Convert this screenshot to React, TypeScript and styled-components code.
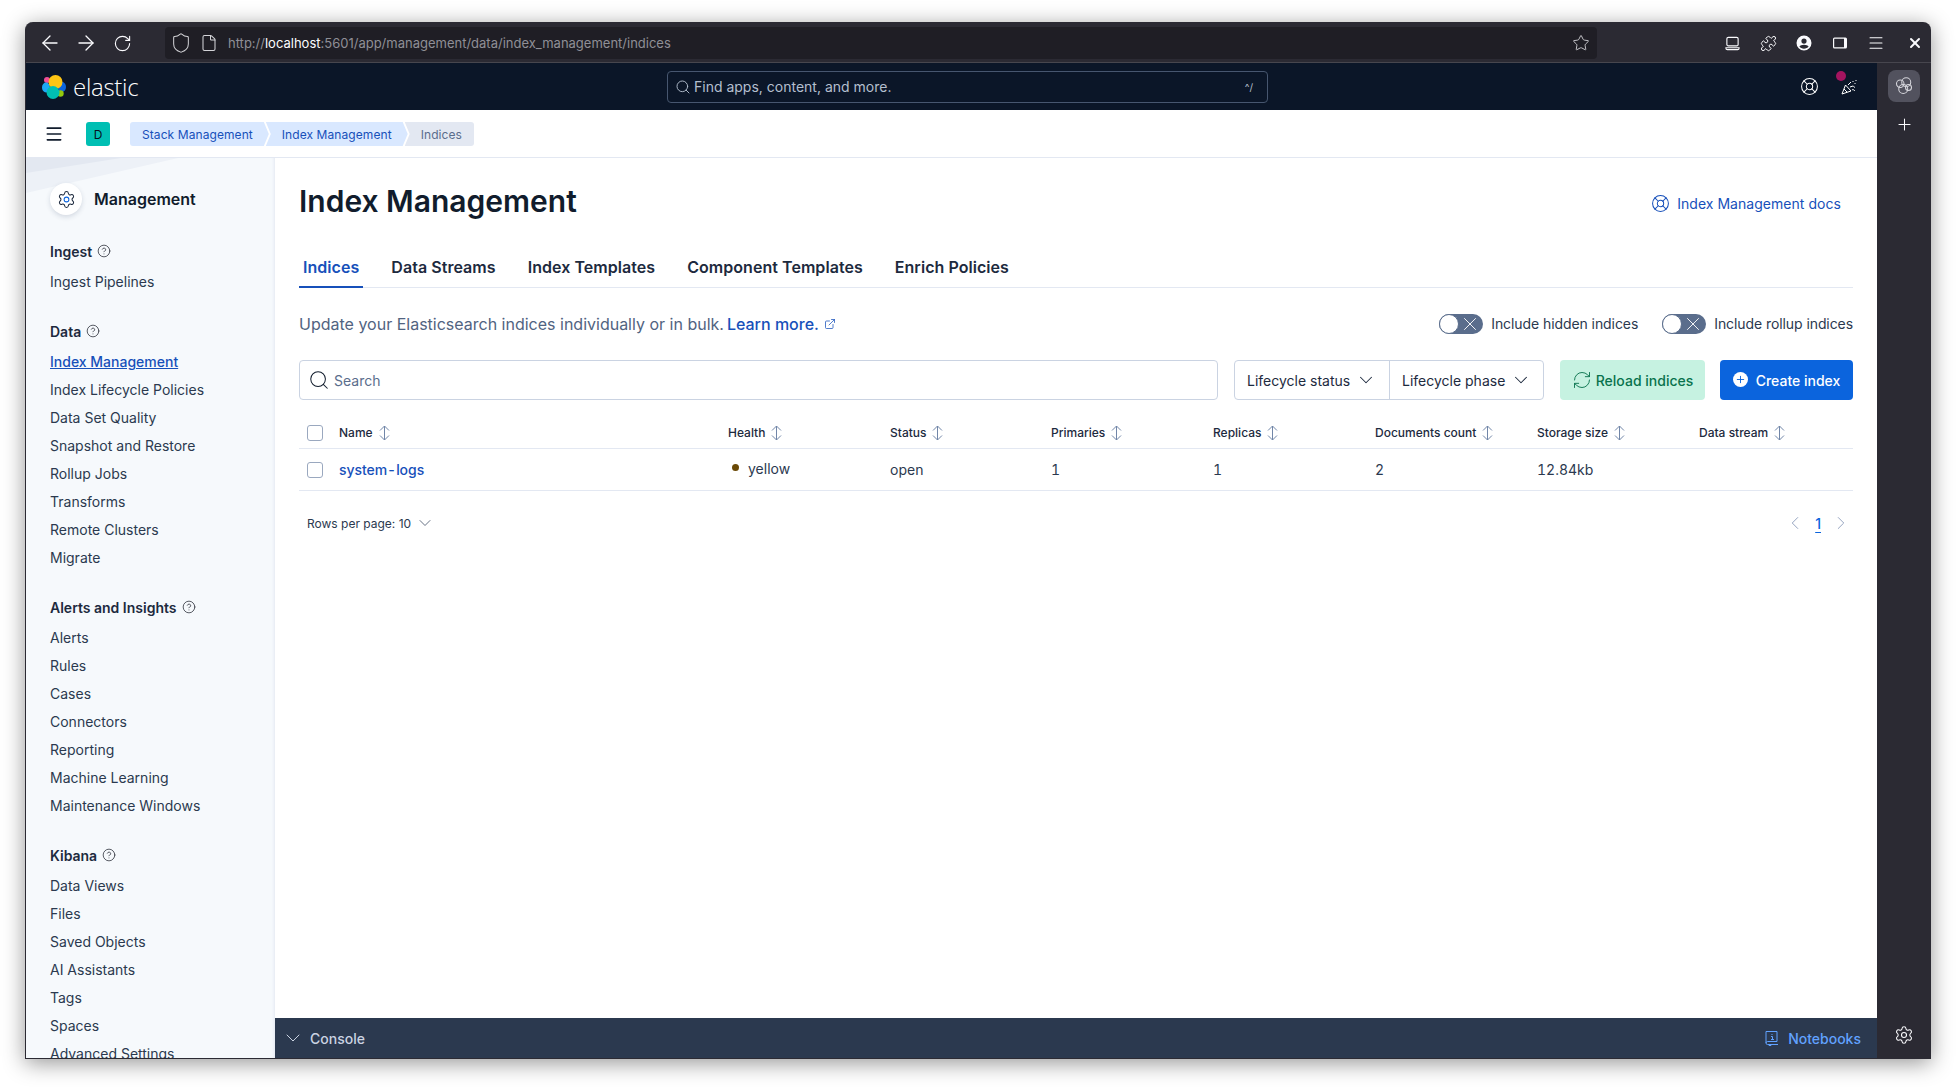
import React from "react";
import styled, { createGlobalStyle } from "styled-components";
import {
  ArrowLeft,
  ArrowRight,
  ChevronDown,
  ChevronLeft,
  ChevronRight,
  CircleHelp,
  ExternalLink,
  File,
  LifeBuoy,
  Menu,
  Plus,
  Puzzle,
  RefreshCw,
  RotateCw,
  Search,
  Settings,
  Shield,
  Star,
  X,
} from "lucide-react";

const Global = createGlobalStyle`
  html, body { margin: 0; padding: 0; background: #fff; }
  body { font-family: Inter, "Noto Sans", sans-serif; color: #1d2a3e; }
  * { box-sizing: border-box; }
`;

const Page = styled.div`
  width: 1956px;
  height: 1087px;
  padding: 22px 25px 28px 25px;
  overflow: hidden;
`;

const Win = styled.div`
  width: 1906px;
  height: 1037px;
  display: flex;
  flex-direction: column;
  background: #2b2a33;
  border-left: 1px solid #2b2a33;
  border-bottom: 1px solid #2b2a33;
  border-radius: 8px 8px 0 0;
  box-shadow: 0 4px 22px rgba(0, 0, 0, 0.42);
  overflow: hidden;
`;

const Toolbar = styled.div`
  height: 41px;
  flex: none;
  display: flex;
  align-items: center;
  padding: 2px 0 0 6px;
  color: #fbfbfe;
  border-bottom: 1px solid #47464e;
`;

const NavBtn = styled.div`
  width: 36px;
  height: 36px;
  display: flex;
  align-items: center;
  justify-content: center;
  flex: none;
`;

const AddressBar = styled.div`
  width: 1432px;
  height: 32px;
  margin-left: 25px;
  margin-right: 117px;
  flex: none;
  background: #1f1e25;
  border-radius: 4px;
  display: flex;
  align-items: center;
  padding: 0 7px 0 5px;
  gap: 8px;
  color: #d4d4d8;
`;

const Url = styled.div`
  flex: 1;
  font-family: Inter, sans-serif;
  font-size: 13px;
  color: #8f8f96;
  margin-left: 2px;
  b {
    font-weight: 400;
    color: #fbfbfe;
  }
`;

const ToolIcons = styled.div`
  display: flex;
  align-items: center;
  margin-right: 3px;
`;

const Body = styled.div`
  flex: 1;
  display: flex;
  min-height: 0;
`;

const Main = styled.div`
  width: 1851px;
  flex: none;
  display: flex;
  flex-direction: column;
  background: #fff;
`;

const SideStrip = styled.div`
  flex: 1;
  display: flex;
  flex-direction: column;
  align-items: center;
  padding-top: 7px;
  color: #fbfbfe;
`;

const StripActive = styled.div`
  width: 32px;
  height: 32px;
  border-radius: 8px;
  background: #52525e;
  display: flex;
  align-items: center;
  justify-content: center;
`;

const StripPlus = styled.div`
  margin-top: 6px;
  height: 32px;
  display: flex;
  align-items: center;
  color: #fbfbfe;
`;

const StripGear = styled.div`
  margin-top: auto;
  height: 40px;
  display: flex;
  align-items: center;
  padding-bottom: 6px;
`;

const Header = styled.header`
  height: 47px;
  flex: none;
  background: #0b1628;
  display: flex;
  align-items: center;
  padding: 0 20px 0 16px;
  color: #fff;
`;

const Logo = styled.div`
  width: 625px;
  flex: none;
  display: flex;
  align-items: center;
  gap: 7px;
  font-family: "Open Sans", Inter, sans-serif;
  font-size: 24px;
  font-weight: 300;
  letter-spacing: -0.3px;
`;

const GlobalSearch = styled.div`
  width: 601px;
  height: 32px;
  border: 1px solid #47566f;
  border-radius: 4px;
  display: flex;
  align-items: center;
  padding: 0 14px 0 7px;
  gap: 3px;
  color: #b4bfcf;
  font-size: 14px;
  span:last-child {
    margin-left: auto;
    font-size: 10px;
  }
`;

const HeaderRight = styled.div`
  margin-left: auto;
  display: flex;
  align-items: center;
  gap: 22px;
`;

const Party = styled.div`
  position: relative;
  width: 16px;
  height: 16px;
  display: flex;
`;

const Dot = styled.span`
  position: absolute;
  top: -8px;
  left: -5px;
  width: 10px;
  height: 10px;
  border-radius: 50%;
  background: #a4145f;
`;

const CrumbBar = styled.div`
  height: 48px;
  flex: none;
  display: flex;
  align-items: center;
  padding: 1px 0 0 18px;
  border-bottom: 1px solid #e3e8f2;
  color: #111c2c;
`;

const Badge = styled.div`
  width: 24px;
  height: 24px;
  margin-left: 22px;
  margin-right: 20px;
  border-radius: 3px;
  background: #00bfb3;
  display: flex;
  align-items: center;
  justify-content: center;
  font-size: 12px;
  color: #07101f;
`;

const Crumbs = styled.div`
  display: flex;
  height: 24px;
`;

const Crumb = styled.div<{ $last?: boolean; $first?: boolean }>`
  height: 24px;
  display: flex;
  align-items: center;
  font-size: 12px;
  letter-spacing: 0.08px;
  padding: ${(p) => (p.$first ? "0 16px 0 12px" : p.$last ? "0 12px 0 16px" : "0 16px")};
  margin-left: ${(p) => (p.$first ? 0 : "-3px")};
  background: ${(p) => (p.$last ? "#e3e8f2" : "#d9e8ff")};
  color: ${(p) => (p.$last ? "#5a6d8c" : "#1750ba")};
  border-radius: ${(p) => (p.$first ? "3px 0 0 3px" : p.$last ? "0 3px 3px 0" : 0)};
  clip-path: ${(p) =>
    p.$first
      ? "polygon(0 0, calc(100% - 5px) 0, 100% 50%, calc(100% - 5px) 100%, 0 100%)"
      : p.$last
        ? "polygon(0 0, 100% 0, 100% 100%, 0 100%, 5px 50%)"
        : "polygon(0 0, calc(100% - 5px) 0, 100% 50%, calc(100% - 5px) 100%, 0 100%, 5px 50%)"};
`;

const Content = styled.div`
  flex: 1;
  display: flex;
  min-height: 0;
`;

const Sidebar = styled.aside`
  position: relative;
  width: 249px;
  flex: none;
  height: 100%;
  overflow: hidden;
  background: #f6f9fc;
  padding: 25px 16px 0 24px;
  box-shadow: inset -3px 0 3px -2px #e3e8f2;
  &::before {
    content: "";
    position: absolute;
    top: 0;
    left: 0;
    width: 152px;
    height: 35px;
    background: #edf1f7;
    clip-path: polygon(0 0, 100% 0, 0 100%);
  }
  &::after {
    content: "";
    position: absolute;
    top: 0;
    left: 0;
    width: 95px;
    height: 15px;
    background: #e3e8f1;
    clip-path: polygon(0 0, 100% 0, 0 100%);
  }
`;

const SideTitle = styled.div`
  position: relative;
  z-index: 1;
  display: flex;
  align-items: center;
  gap: 12px;
  margin-bottom: 27px;
  font-size: 16px;
  font-weight: 600;
  color: #111c2c;
`;

const SolutionIcon = styled.div`
  width: 32px;
  height: 32px;
  border-radius: 50%;
  background: #fff;
  box-shadow: 0 2px 5px rgba(30, 50, 90, 0.16);
  display: flex;
  align-items: center;
  justify-content: center;
  color: #1d2a3e;
  svg circle {
    stroke: #0b64dd;
  }
`;

const Group = styled.div`
  margin-bottom: 27px;
`;

const GroupTitle = styled.div`
  height: 18px;
  margin-bottom: 7px;
  display: flex;
  align-items: center;
  gap: 5px;
  font-size: 14px;
  font-weight: 600;
  color: #1d2a3e;
  svg {
    color: #343741;
  }
`;

const SideItem = styled.div<{ $active?: boolean }>`
  height: 28px;
  display: flex;
  align-items: center;
  font-size: 14px;
  white-space: nowrap;
  color: ${(p) => (p.$active ? "#1750ba" : "#2b394f")};
  font-weight: ${(p) => (p.$active ? 500 : 400)};
  text-decoration: ${(p) => (p.$active ? "underline" : "none")};
`;

const MainCol = styled.div`
  flex: 1;
  min-width: 0;
  display: flex;
  flex-direction: column;
`;

const Panel = styled.main`
  flex: 1;
  min-height: 0;
  padding: 0 24px;
`;

const TitleRow = styled.div`
  height: 86px;
  display: flex;
  align-items: center;
  justify-content: space-between;
`;

const H1 = styled.h1`
  margin: 0;
  font-size: 30px;
  line-height: 40px;
  font-weight: 600;
  color: #111c2c;
`;

const DocsLink = styled.div`
  display: flex;
  align-items: center;
  gap: 7px;
  margin-right: 12px;
  margin-top: 5px;
  font-size: 14px;
  letter-spacing: 0.04px;
  color: #1750ba;
`;

const Tabs = styled.div`
  height: 44px;
  display: flex;
  gap: 24px;
  border-bottom: 1px solid #e3e8f2;
`;

const Tab = styled.div<{ $active?: boolean }>`
  height: 44px;
  display: flex;
  align-items: center;
  font-size: 16px;
  font-weight: 600;
  letter-spacing: 0.05px;
  padding: 2px 4px 0;
  color: ${(p) => (p.$active ? "#1750ba" : "#1d2a3e")};
  position: relative;
  &::after {
    content: "";
    display: ${(p) => (p.$active ? "block" : "none")};
    position: absolute;
    left: 0;
    right: 0;
    bottom: 0;
    height: 2px;
    background: #1750ba;
  }
`;

const InfoRow = styled.div`
  height: 72px;
  display: flex;
  align-items: center;
  font-size: 16px;
  line-height: 24px;
  color: #516381;
`;

const InfoLink = styled.div`
  display: flex;
  align-items: center;
  gap: 5px;
  margin-left: 3px;
  color: #1750ba;
  font-weight: 500;
`;

const Switches = styled.div`
  margin-left: auto;
  display: flex;
  gap: 24px;
`;

const SwitchLabel = styled.div`
  display: flex;
  align-items: center;
  height: 24px;
  gap: 8px;
  font-size: 14px;
  letter-spacing: -0.08px;
  color: #2b394f;
`;

const SwitchTrack = styled.div`
  position: relative;
  width: 44px;
  height: 20px;
  border-radius: 10px;
  background: #5a6d8c;
  display: flex;
  align-items: center;
  justify-content: flex-end;
  padding-right: 2px;
  color: #fff;
`;

const SwitchThumb = styled.span`
  position: absolute;
  left: 0;
  top: 0;
  width: 20px;
  height: 20px;
  border-radius: 50%;
  background: #fff;
  border: 1px solid #5a6d8c;
`;

const Controls = styled.div`
  display: flex;
  height: 40px;
`;

const SearchBox = styled.div`
  width: 919px;
  height: 40px;
  border: 1px solid #cad3e2;
  border-radius: 4px;
  display: flex;
  align-items: center;
  padding: 0 8px;
  gap: 4px;
  font-size: 14px;
  color: #5a6d8c;
  svg {
    color: #111c2c;
  }
`;

const FilterGroup = styled.div`
  margin-left: 16px;
  height: 40px;
  display: flex;
  border: 1px solid #cad3e2;
  border-radius: 4px;
`;

const Filter = styled.div<{ $divider?: boolean }>`
  display: flex;
  align-items: center;
  gap: 5px;
  padding: 0 0 0 12px;
  font-size: 14px;
  color: #1d2a3e;
  border-left: ${(p) => (p.$divider ? "1px solid #cad3e2" : "none")};
  width: 154px;
`;

const Button = styled.div<{ $fill?: boolean }>`
  height: 40px;
  margin-left: ${(p) => (p.$fill ? "15px" : "16px")};
  display: flex;
  align-items: center;
  justify-content: center;
  gap: ${(p) => (p.$fill ? "8px" : "4px")};
  width: ${(p) => (p.$fill ? "133px" : "145px")};
  border-radius: 4px;
  font-size: 14px;
  font-weight: 500;
  background: ${(p) => (p.$fill ? "#0b64dd" : "#c6f2e1")};
  color: ${(p) => (p.$fill ? "#fff" : "#09724d")};
`;

const PlusDisc = styled.span`
  width: 15px;
  height: 15px;
  border-radius: 50%;
  background: #fff;
  color: #0b64dd;
  display: flex;
  align-items: center;
  justify-content: center;
  margin-top: -2px;
`;

const Table = styled.div`
  margin-top: 17px;
`;

const TableRow = styled.div<{ $head?: boolean }>`
  display: grid;
  grid-template-columns: 32px 389px 162px 161px 162px 162px 162px 162px 162px;
  height: ${(p) => (p.$head ? "32px" : "42px")};
  align-items: center;
  border-bottom: 1px solid #e3e8f2;
  font-size: ${(p) => (p.$head ? "12px" : "14px")};
  font-weight: ${(p) => (p.$head ? 500 : 400)};
  font-variant-numeric: tabular-nums;
  color: ${(p) => (p.$head ? "#1d2a3e" : "#2b394f")};
`;

const Check = styled.span`
  width: 16px;
  height: 16px;
  margin-left: 8px;
  border: 1px solid #9aa8bf;
  border-radius: 3px;
  background: #fff;
  display: block;
`;

const HeadCell = styled.div`
  display: flex;
  align-items: center;
  gap: 6px;
  padding-left: 8px;
  svg {
    color: #7186a8;
  }
`;

const Cell = styled.div`
  padding-left: 8px;
`;

const NameLink = styled.span`
  color: #1750ba;
  font-weight: 500;
  letter-spacing: -0.05px;
`;

const Health = styled.div`
  display: flex;
  align-items: center;
  gap: 9px;
  padding-left: 12px;
  margin-top: -3px;
`;

const HealthDot = styled.span`
  width: 7px;
  height: 7px;
  border-radius: 50%;
  background: #6a4906;
  margin-top: -1px;
`;

const Pager = styled.div`
  height: 64px;
  display: flex;
  align-items: center;
  justify-content: space-between;
  padding: 0 1px 0 8px;
`;

const RowsPerPage = styled.div`
  display: flex;
  align-items: center;
  gap: 4px;
  font-size: 12px;
  color: #2b394f;
  svg {
    color: #48566c;
  }
`;

const PageNav = styled.div`
  display: flex;
  align-items: center;
  gap: 9px;
  color: #8c9dbb;
`;

const PageNum = styled.span`
  font-size: 14px;
  font-weight: 500;
  color: #0b64dd;
  text-decoration: underline;
  text-underline-offset: 3px;
`;

const ConsoleBar = styled.div`
  height: 40px;
  flex: none;
  background: #2b394f;
  display: flex;
  align-items: center;
  justify-content: space-between;
  padding: 0 16px 0 6px;
  font-size: 14px;
`;

const ConsoleLabel = styled.div`
  display: flex;
  align-items: center;
  gap: 5px;
  color: #cad3e2;
  font-weight: 500;
`;

const NotebooksLabel = styled.div`
  display: flex;
  align-items: center;
  gap: 9px;
  color: #61a2ff;
  font-weight: 500;
`;

const ElasticLogo = () => (
  <svg width="24" height="24" viewBox="0 0 24 24">
    <circle cx="5" cy="5" r="3" fill="#f04e98" />
    <ellipse cx="4" cy="12.500" rx="4" ry="5" fill="#1ba9f5" />
    <ellipse cx="20" cy="12" rx="4" ry="5" fill="#0b64dd" />
    <circle cx="13.500" cy="7" r="7" fill="#fec514" />
    <circle cx="18.500" cy="18.500" r="3.200" fill="#93c90e" />
    <circle cx="11" cy="17.500" r="6.500" fill="#00bfb3" />
  </svg>
);

const StripLogo = () => (
  <svg width="18" height="18" viewBox="0 0 24 24" fill="none" stroke="#d6d6dc" strokeWidth="1.4">
    <circle cx="7" cy="9" r="5" />
    <circle cx="15" cy="7" r="6" />
    <circle cx="11" cy="16" r="6" />
    <circle cx="18" cy="14" r="4" />
  </svg>
);

const SortIcon = () => (
  <svg width="11" height="16" viewBox="0 0 11 16" fill="none" stroke="currentColor" strokeWidth="1">
    <path d="M5.500 1v14M1 5.500l4.500-4.500 4.500 4.500M1 10.500l4.500 4.500 4.500-4.500" />
  </svg>
);

const PartyIcon = () => (
  <svg width="16" height="16" viewBox="0 0 16 16" fill="none" stroke="#fff" strokeWidth="1">
    <path d="M1 15l3.500-9 5.500 6zM3 10l3 3M7 6l3-3M9 8l3-1c1 0 1 2 2 1M11 11c1-1 2 0 3 1M12 2v1M14 4v1M15 1v1" />
  </svg>
);

const TrayIcon = () => (
  <svg width="15" height="15" viewBox="0 0 16 16" fill="none" stroke="currentColor" strokeWidth="1.200">
    <rect x="2" y="1.500" width="12" height="9" rx="1.500" />
    <path d="M1 12.500v.5a1.500 1.500 0 0 0 1.500 1.500h11A1.500 1.500 0 0 0 15 13v-.5z" />
  </svg>
);

const AccountIcon = () => (
  <svg width="16" height="16" viewBox="0 0 16 16" fill="currentColor">
    <path d="M8 0.500a7.500 7.500 0 1 0 0 15 7.500 7.500 0 0 0 0-15zm0 3a2.600 2.600 0 1 1 0 5.200 2.600 2.600 0 0 1 0-5.200zm0 10.200c-1.900 0-3.600-.8-4.600-2.100.7-1.100 2.600-1.800 4.600-1.800s3.900.7 4.600 1.800c-1 1.300-2.700 2.100-4.600 2.100z" />
  </svg>
);

const SidebarIcon = () => (
  <svg width="16" height="16" viewBox="0 0 16 16" fill="currentColor">
    <path d="M2.500 2.500h11A1.500 1.500 0 0 1 15 4v8a1.500 1.500 0 0 1-1.500 1.500h-11A1.500 1.500 0 0 1 1 12V4a1.500 1.500 0 0 1 1.500-1.500zm0 1.200a.4.4 0 0 0-.3.3v8c0 .2.1.3.3.3H12V3.700z" />
  </svg>
);

const NotebookIcon = () => (
  <svg width="14" height="16" viewBox="0 0 14 16" fill="none" stroke="currentColor" strokeWidth="1">
    <path d="M1 13V1.500h11v10H2.500A1.500 1.500 0 0 0 1 13a1.500 1.500 0 0 0 1.500 1.500H13" />
    <path d="M6.500 4.500h1M6 6.500h1.500v3M6 9.500h3M4 14v1.500h2V14" />
  </svg>
);

const groups: { title: string; items: string[] }[] = [
  { title: "Ingest", items: ["Ingest Pipelines"] },
  {
    title: "Data",
    items: [
      "Index Management",
      "Index Lifecycle Policies",
      "Data Set Quality",
      "Snapshot and Restore",
      "Rollup Jobs",
      "Transforms",
      "Remote Clusters",
      "Migrate",
    ],
  },
  {
    title: "Alerts and Insights",
    items: ["Alerts", "Rules", "Cases", "Connectors", "Reporting", "Machine Learning", "Maintenance Windows"],
  },
  {
    title: "Kibana",
    items: ["Data Views", "Files", "Saved Objects", "AI Assistants", "Tags", "Spaces", "Advanced Settings"],
  },
];

const columns = ["Name", "Health", "Status", "Primaries", "Replicas", "Documents count", "Storage size", "Data stream"];

const Toggle = ({ label }: { label: string }) => (
  <SwitchLabel>
    <SwitchTrack>
      <SwitchThumb />
      <X size={22} strokeWidth={1} />
    </SwitchTrack>
    {label}
  </SwitchLabel>
);

export default function App() {
  return (
    <Page>
      <Global />
      <Win>
        <Toolbar>
          <NavBtn><ArrowLeft size={24} strokeWidth={1.3} /></NavBtn>
          <NavBtn><ArrowRight size={24} strokeWidth={1.3} /></NavBtn>
          <NavBtn><RotateCw size={19} strokeWidth={1.4} /></NavBtn>
          <AddressBar>
            <Shield size={22} strokeWidth={1.1} />
            <File size={18} strokeWidth={1.4} />
            <Url>
              http://<b>localhost</b>:5601/app/management/data/index_management/indices
            </Url>
            <Star size={18} strokeWidth={1.2} />
          </AddressBar>
          <ToolIcons>
            <NavBtn><TrayIcon /></NavBtn>
            <NavBtn><Puzzle size={17} strokeWidth={1.4} /></NavBtn>
            <NavBtn><AccountIcon /></NavBtn>
            <NavBtn><SidebarIcon /></NavBtn>
            <NavBtn><Menu size={18} strokeWidth={1.4} /></NavBtn>
          </ToolIcons>
          <NavBtn><X size={16} strokeWidth={3} /></NavBtn>
        </Toolbar>
        <Body>
          <Main>
            <Header>
              <Logo>
                <ElasticLogo />
                elastic
              </Logo>
              <GlobalSearch>
                <Search size={16} strokeWidth={1.4} />
                <span>Find apps, content, and more.</span>
                <span>^/</span>
              </GlobalSearch>
              <HeaderRight>
                <LifeBuoy size={19} strokeWidth={1.3} />
                <Party>
                  <PartyIcon />
                  <Dot />
                </Party>
              </HeaderRight>
            </Header>
            <CrumbBar>
              <Menu size={20} strokeWidth={2} />
              <Badge>D</Badge>
              <Crumbs>
                <Crumb $first>Stack Management</Crumb>
                <Crumb>Index Management</Crumb>
                <Crumb $last>Indices</Crumb>
              </Crumbs>
            </CrumbBar>
            <Content>
              <Sidebar>
                <SideTitle>
                  <SolutionIcon>
                    <Settings size={19} strokeWidth={1.3} />
                  </SolutionIcon>
                  Management
                </SideTitle>
                {groups.map((g) => (
                  <Group key={g.title}>
                    <GroupTitle>
                      {g.title}
                      <CircleHelp size={14} strokeWidth={1.4} />
                    </GroupTitle>
                    {g.items.map((item) => (
                      <SideItem key={item} $active={item === "Index Management"}>
                        {item}
                      </SideItem>
                    ))}
                  </Group>
                ))}
              </Sidebar>
              <MainCol>
                <Panel>
                  <TitleRow>
                    <H1>Index Management</H1>
                    <DocsLink>
                      <LifeBuoy size={19} strokeWidth={1.3} />
                      Index Management docs
                    </DocsLink>
                  </TitleRow>
                  <Tabs>
                    <Tab $active>Indices</Tab>
                    <Tab>Data Streams</Tab>
                    <Tab>Index Templates</Tab>
                    <Tab>Component Templates</Tab>
                    <Tab>Enrich Policies</Tab>
                  </Tabs>
                  <InfoRow>
                    Update your Elasticsearch indices individually or in bulk.
                    <InfoLink>
                      Learn more.
                      <ExternalLink size={12} strokeWidth={1.5} />
                    </InfoLink>
                    <Switches>
                      <Toggle label="Include hidden indices" />
                      <Toggle label="Include rollup indices" />
                    </Switches>
                  </InfoRow>
                  <Controls>
                    <SearchBox>
                      <Search size={22} strokeWidth={1.1} />
                      Search
                    </SearchBox>
                    <FilterGroup>
                      <Filter>Lifecycle status <ChevronDown size={22} strokeWidth={1.1} /></Filter>
                      <Filter $divider>Lifecycle phase <ChevronDown size={22} strokeWidth={1.1} /></Filter>
                    </FilterGroup>
                    <Button>
                      <RefreshCw size={20} strokeWidth={1.1} />
                      Reload indices
                    </Button>
                    <Button $fill>
                      <PlusDisc><Plus size={11} strokeWidth={2} /></PlusDisc>
                      Create index
                    </Button>
                  </Controls>
                  <Table>
                    <TableRow $head>
                      <Check />
                      {columns.map((c) => (
                        <HeadCell key={c}>
                          {c}
                          <SortIcon />
                        </HeadCell>
                      ))}
                    </TableRow>
                    <TableRow>
                      <Check />
                      <Cell><NameLink>system-logs</NameLink></Cell>
                      <Health><HealthDot />yellow</Health>
                      <Cell>open</Cell>
                      <Cell>1</Cell>
                      <Cell>1</Cell>
                      <Cell>2</Cell>
                      <Cell>12.84kb</Cell>
                      <Cell />
                    </TableRow>
                  </Table>
                  <Pager>
                    <RowsPerPage>
                      Rows per page: 10
                      <ChevronDown size={20} strokeWidth={1} />
                    </RowsPerPage>
                    <PageNav>
                      <ChevronLeft size={22} strokeWidth={1} />
                      <PageNum>1</PageNum>
                      <ChevronRight size={22} strokeWidth={1} />
                    </PageNav>
                  </Pager>
                </Panel>
                <ConsoleBar>
                  <ConsoleLabel>
                    <ChevronDown size={24} strokeWidth={1} />
                    Console
                  </ConsoleLabel>
                  <NotebooksLabel>
                    <NotebookIcon />
                    Notebooks
                  </NotebooksLabel>
                </ConsoleBar>
              </MainCol>
            </Content>
          </Main>
          <SideStrip>
            <StripActive><StripLogo /></StripActive>
            <StripPlus><Plus size={19} strokeWidth={1.3} /></StripPlus>
            <StripGear><Settings size={20} strokeWidth={1.3} /></StripGear>
          </SideStrip>
        </Body>
      </Win>
    </Page>
  );
}
